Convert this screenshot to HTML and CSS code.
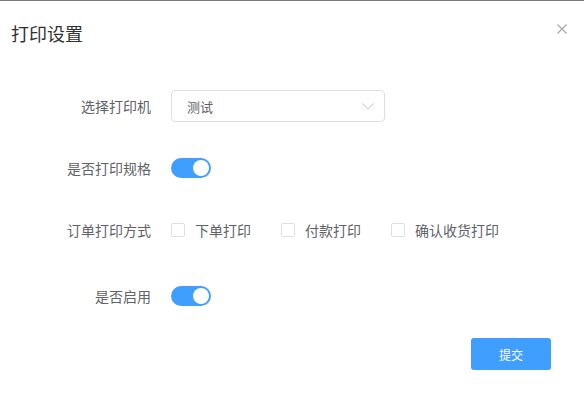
FILE: index.html
```html
<!DOCTYPE html>
<html lang="zh-CN">
<head>
<meta charset="utf-8">
<title>打印设置</title>
<link rel="stylesheet" href="styles.css">
</head>
<body>
<div class="dialog">
  <div class="header">
    <span class="title">打印设置</span>
    <svg class="close" width="10" height="10" viewBox="0 0 10 10"><path d="M0.5 0.5 L9.5 9.5 M9.5 0.5 L0.5 9.5" stroke="#a3a6ad" stroke-width="1.1" fill="none"/></svg>
  </div>
  <div class="form">
    <div class="row r1">
      <div class="label">选择打印机</div>
      <div class="select">
        <span class="sel-text">测试</span>
        <svg class="arrow" width="12" height="7" viewBox="0 0 12 7"><path d="M0.5 0.5 L6 6 L11.5 0.5" stroke="#c0c4cc" stroke-width="1" fill="none"/></svg>
      </div>
    </div>
    <div class="row r2">
      <div class="label">是否打印规格</div>
      <div class="switch"><span class="knob"></span></div>
    </div>
    <div class="row r3">
      <div class="label">订单打印方式</div>
      <div class="checks">
        <label class="check"><span class="box"></span><span>下单打印</span></label>
        <label class="check"><span class="box"></span><span>付款打印</span></label>
        <label class="check"><span class="box"></span><span>确认收货打印</span></label>
      </div>
    </div>
    <div class="row r4">
      <div class="label">是否启用</div>
      <div class="switch"><span class="knob"></span></div>
    </div>
  </div>
  <div class="footer">
    <button class="btn">提交</button>
  </div>
</div>
</body>
</html>
```
FILE: styles.css
```css
html, body {
  margin: 0;
  padding: 0;
  background: #fff;
}
body {
  border-top: 1px solid #7a7a7a;
  font-family: "Noto Sans CJK SC", "Noto Sans", sans-serif;
  color: #606266;
}
.dialog {
  padding: 20px 17px 0 11px;
}
.header {
  display: flex;
  justify-content: space-between;
  align-items: flex-start;
  height: 24px;
}
.title {
  font-size: 18px;
  line-height: 24px;
  color: #303133;
}
.close {
  margin-top: 3px;
  display: block;
}
.form {
  margin-top: 45px;
}
.row {
  display: flex;
  align-items: center;
  height: 32px;
}
.r2 { margin-top: 30px; }
.r3 { margin-top: 30px; }
.r4 { margin-top: 34px; }
.label {
  width: 140px;
  text-align: right;
  font-size: 14px;
  line-height: 32px;
  color: #606266;
  margin-right: 20px;
  flex: none;
}
.select {
  box-sizing: border-box;
  width: 214px;
  height: 32px;
  border: 1px solid #dcdfe6;
  border-radius: 4px;
  display: flex;
  align-items: center;
  justify-content: space-between;
  padding: 0 10px 0 15px;
}
.sel-text {
  font-size: 13px;
  color: #606266;
}
.arrow {
  display: block;
  margin-top: 1px;
}
.switch {
  width: 40px;
  height: 20px;
  border-radius: 10px;
  background: #409eff;
  display: flex;
  align-items: center;
  justify-content: flex-end;
  padding-right: 2px;
  box-sizing: border-box;
}
.knob {
  width: 16px;
  height: 16px;
  border-radius: 50%;
  background: #fff;
}
.checks {
  display: flex;
  align-items: center;
}
.check {
  display: flex;
  align-items: center;
  margin-right: 30px;
  font-size: 14px;
  color: #606266;
}
.box {
  box-sizing: border-box;
  width: 14px;
  height: 14px;
  border: 1px solid #dcdfe6;
  border-radius: 2px;
  margin-right: 10px;
  background: #fff;
}
.footer {
  display: flex;
  justify-content: flex-end;
  margin-top: 26px;
  padding-right: 16px;
}
.btn {
  width: 80px;
  height: 32px;
  border: none;
  border-radius: 3px;
  background: #409eff;
  color: #fff;
  font-family: "Noto Sans CJK SC", "Noto Sans", sans-serif;
  font-size: 12px;
  padding: 0;
}
```
